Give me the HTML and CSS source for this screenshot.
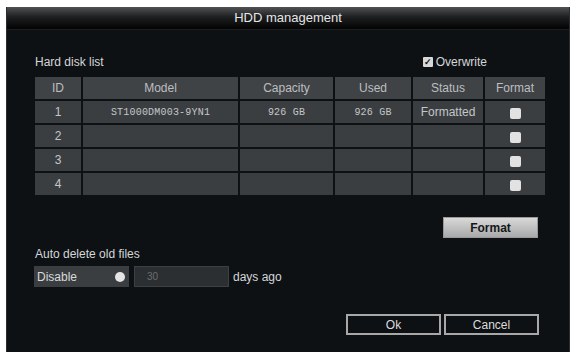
FILE: index.html
```html
<!DOCTYPE html>
<html lang="en">
<head>
  <meta charset="UTF-8" />
  <title>HDD management</title>
  <link rel="stylesheet" href="styles.css">
</head>
<body>
  <div class="dialog">
    <div class="titlebar">HDD management</div>

    <div class="content">
      <div class="list-head">
        <span>Hard disk list</span>
        <label class="overwrite"><span class="tick">&#10003;</span>Overwrite</label>
      </div>

      <div class="disk-table">
        <div class="cell head">ID</div>
        <div class="cell head">Model</div>
        <div class="cell head">Capacity</div>
        <div class="cell head">Used</div>
        <div class="cell head">Status</div>
        <div class="cell head">Format</div>

        <div class="cell">1</div>
        <div class="cell mono">ST1000DM003-9YN1</div>
        <div class="cell mono">926 GB</div>
        <div class="cell mono">926 GB</div>
        <div class="cell">Formatted</div>
        <div class="cell"><span class="box"></span></div>

        <div class="cell">2</div>
        <div class="cell"></div>
        <div class="cell"></div>
        <div class="cell"></div>
        <div class="cell"></div>
        <div class="cell"><span class="box"></span></div>

        <div class="cell">3</div>
        <div class="cell"></div>
        <div class="cell"></div>
        <div class="cell"></div>
        <div class="cell"></div>
        <div class="cell"><span class="box"></span></div>

        <div class="cell">4</div>
        <div class="cell"></div>
        <div class="cell"></div>
        <div class="cell"></div>
        <div class="cell"></div>
        <div class="cell"><span class="box"></span></div>
      </div>

      <div class="format-row">
        <button class="btn-light">Format</button>
      </div>

      <div class="auto-label">Auto delete old files</div>
      <div class="auto-row">
        <div class="select">Disable<span class="knob"></span></div>
        <div class="days-input">30</div>
        <span class="suffix">days ago</span>
      </div>

      <div class="actions">
        <button class="btn-outline">Ok</button>
        <button class="btn-outline">Cancel</button>
      </div>
    </div>
  </div>
</body>
</html>
```

FILE: styles.css
```css
* {
  margin: 0;
  padding: 0;
  box-sizing: border-box;
}

body {
  background: #ffffff;
  font-family: 'Liberation Sans', Arial, sans-serif;
  font-size: 12px;
  color: #d4d6d8;
  padding: 7px 5px 2px 6px;
}

.dialog {
  width: 564px;
  height: 345px;
  background: #0e1114;
  display: flex;
  flex-direction: column;
  border-left: 1px solid #2a2d30;
  border-right: 1px solid #2a2d30;
}

.titlebar {
  height: 23px;
  background: linear-gradient(#505254, #1e1f20 45%, #030303);
  border-bottom: 1px solid #1c1e20;
  color: #e6e6e6;
  text-align: center;
  line-height: 22px;
  font-size: 13px;
}

.content {
  padding: 24px 24px 0 28px;
  display: flex;
  flex-direction: column;
}

.list-head {
  height: 16px;
  display: flex;
  justify-content: space-between;
  align-items: center;
  margin-bottom: 7px;
  padding-right: 58px;
}

.overwrite {
  display: flex;
  align-items: center;
  gap: 3px;
}

.tick {
  width: 10px;
  height: 10px;
  background: #d8d8d8;
  color: #111;
  font-size: 9px;
  line-height: 10px;
  text-align: center;
  font-weight: bold;
  border-radius: 1px;
}

.disk-table {
  display: grid;
  grid-template-columns: 46px 155px 93px 76px 70px 60px;
  grid-auto-rows: 22px;
  gap: 2px;
  width: 510px;
}

.cell {
  background: #3b3e41;
  display: flex;
  align-items: center;
  justify-content: center;
  color: #c4c6c8;
  font-size: 12px;
}

.cell.head {
  background: #404346;
  color: #bcbec0;
}

.cell.mono {
  font-family: 'Liberation Mono', 'Courier New', monospace;
  font-size: 10px;
  letter-spacing: 0.2px;
}

.box {
  width: 11px;
  height: 11px;
  background: #e2e2e2;
  border-radius: 2px;
  margin-top: 2px;
}

.format-row {
  display: flex;
  justify-content: flex-end;
  width: 503px;
  margin-top: 22px;
}

.btn-light {
  width: 95px;
  height: 21px;
  border: 1px solid #9a9a9a;
  background: linear-gradient(#d9d9d9, #a9a9a9);
  color: #15181a;
  font-family: inherit;
  font-size: 12px;
  font-weight: bold;
}

.auto-label {
  margin-top: 8px;
  height: 16px;
  line-height: 16px;
}

.auto-row {
  display: flex;
  align-items: center;
  gap: 5px;
  margin-top: 4px;
  margin-left: -1px;
}

.select {
  width: 95px;
  height: 21px;
  background: #3b3e41;
  display: flex;
  align-items: center;
  justify-content: space-between;
  padding: 0 4px 0 3px;
  color: #d8dadc;
}

.knob {
  width: 10px;
  height: 10px;
  border-radius: 50%;
  background: #e4e4e4;
}

.days-input {
  width: 95px;
  height: 21px;
  background: #2c2f32;
  border: 1px solid #3d4043;
  color: #6a6d70;
  font-size: 10px;
  padding-left: 12px;
  line-height: 19px;
}

.suffix {
  margin-left: -1px;
}

.actions {
  display: flex;
  justify-content: flex-end;
  gap: 3px;
  width: 504px;
  margin-top: 27px;
}

.btn-outline {
  width: 95px;
  height: 21px;
  background: #0e1114;
  border: 2px solid #a8a8a8;
  color: #dcdcdc;
  font-family: inherit;
  font-size: 12px;
}
```
